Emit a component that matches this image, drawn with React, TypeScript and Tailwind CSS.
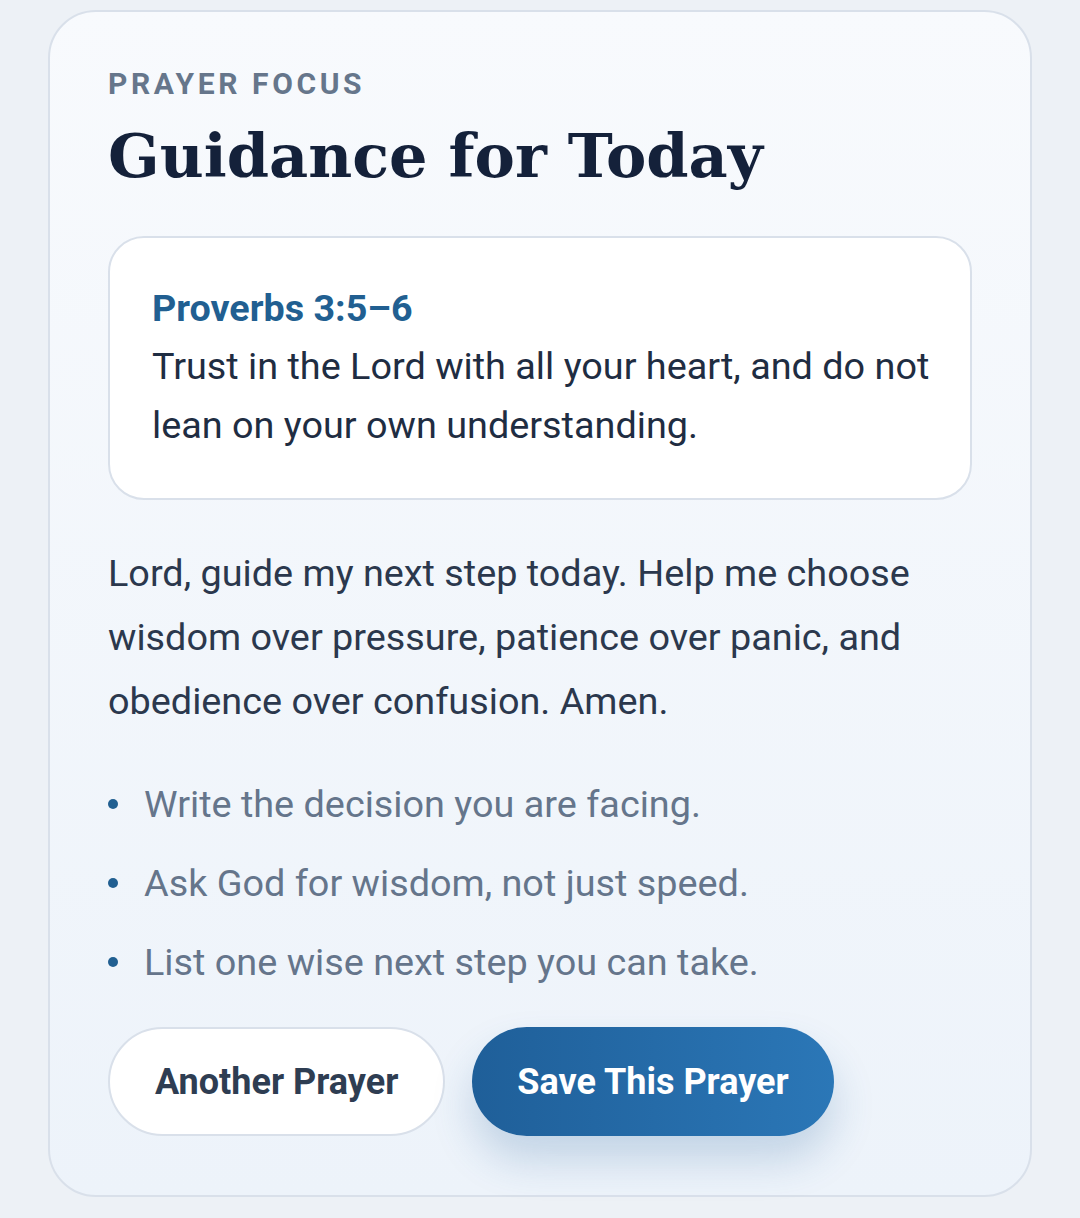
export default function App() {
  const steps = [
    "Write the decision you are facing.",
    "Ask God for wisdom, not just speed.",
    "List one wise next step you can take.",
  ];

  return (
    <div className="min-h-[1218px] bg-[#edf1f6] px-[48px] pt-[10px] pb-[24px] font-['Roboto',sans-serif]">
      <div className="rounded-[48px] border-2 border-[#d9e0ea] bg-gradient-to-b from-[#f8fafd] to-[#edf3fa] px-[58px] pt-[52px] pb-[59px]">
        <div className="text-[30px] font-bold uppercase tracking-[0.12em] leading-[40px] text-[#66768b]">
          Prayer Focus
        </div>
        <h1 className="mt-[14px] font-['DejaVu_Serif',serif] text-[60.5px] font-bold leading-[76px] text-[#14213a]">
          Guidance for Today
        </h1>

        <div className="mt-[42px] rounded-[36px] border-2 border-[#d9e0ea] bg-white pl-[42px] pr-[36px] pt-[48px] pb-[43px]">
          <div className="text-[37.7px] font-bold leading-[44px] text-[#215f91]">Proverbs 3:5–6</div>
          <p className="mt-[7px] text-[37.8px] leading-[59px] text-[#1f2d42]">
            Trust in the Lord with all your heart, and do not lean on your own understanding.
          </p>
        </div>

        <p className="mt-[41px] text-[37.8px] leading-[64px] text-[#2b384d]">
          Lord, guide my next step today. Help me choose wisdom over pressure, patience over panic, and
          obedience over confusion. Amen.
        </p>

        <ul className="mt-[41px] flex flex-col gap-[19px]">
          {steps.map((s) => (
            <li key={s} className="flex items-center gap-[26px] text-[37.8px] leading-[60px] text-[#65758b]">
              <span className="h-[10px] w-[10px] shrink-0 rounded-full bg-[#215f91]" />
              <span>{s}</span>
            </li>
          ))}
        </ul>

        <div className="mt-[35px] flex gap-[27px]">
          <button className="h-[109px] rounded-full border-2 border-[#d9e0ea] bg-white px-[45px] text-[36px] font-bold text-[#2e3d52]">
            Another Prayer
          </button>
          <button className="h-[109px] rounded-full bg-gradient-to-r from-[#1f5f99] to-[#2b77b7] px-[45px] text-[36px] font-bold text-white shadow-[0_24px_40px_rgba(40,100,160,0.22)]">
            Save This Prayer
          </button>
        </div>
      </div>
    </div>
  );
}
